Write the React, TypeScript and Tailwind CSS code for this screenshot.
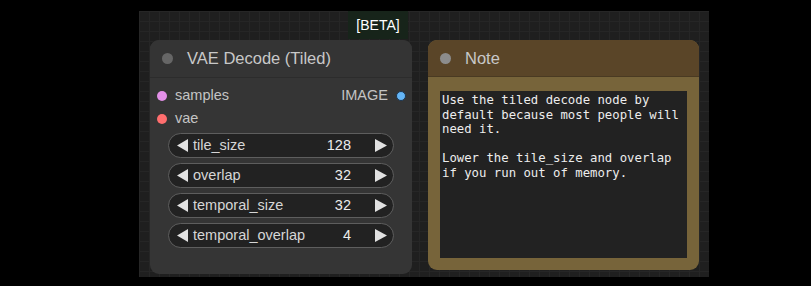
import React from "react";

const sans = { fontFamily: '"Liberation Sans", Arial, sans-serif' };

function Widget({ label, value }: { label: string; value: string }) {
  return (
    <div className="h-[25px] rounded-full border border-[#5e5e5e] bg-[#222222] flex items-center pl-[8px] pr-[6px] text-[14.5px] text-[#d6d6d6]">
      <svg width="11" height="13" viewBox="0 0 11 13" className="shrink-0">
        <path d="M0 6.5 L11 0 L11 13 Z" fill="#e2e2e2" />
      </svg>
      <span className="ml-[5px] flex-1">{label}</span>
      <span className="text-[#ececec] mr-[24px]">{value}</span>
      <svg width="12" height="13" viewBox="0 0 12 13" className="shrink-0">
        <path d="M12 6.5 L0 0 L0 13 Z" fill="#e2e2e2" />
      </svg>
    </div>
  );
}

export default function App() {
  return (
    <div className="w-[811px] h-[286px] bg-black relative overflow-hidden" style={sans}>
      <div className="absolute left-[139px] top-[11px] w-[570px] h-[266px] bg-[#1f1f1f] bg-[linear-gradient(#262626_1px,transparent_1px),linear-gradient(90deg,#262626_1px,transparent_1px)] bg-[size:10px_10px]">
        <div className="absolute left-[209px] top-0 w-[60px] h-[28px] bg-[#17241a] flex items-center justify-center text-[14px] text-white">
          [BETA]
        </div>
        {/* VAE node */}
        <div className="absolute left-[11px] top-[29px] w-[262px] h-[234px] rounded-[9px] bg-[#353535] flex flex-col">
          <div className="h-[38px] flex items-center border-b border-[#2c2c2c] rounded-t-[9px] bg-[#343434]">
            <div className="w-[11px] h-[11px] rounded-full bg-[#666666] ml-[12px]" />
            <span className="ml-[14px] text-[16.5px] text-[#c8c8c8]">VAE Decode (Tiled)</span>
          </div>
          <div className="flex items-center h-[21px] mt-[7px] pl-[7px] pr-[6px] text-[14.5px] text-[#c4c4c4]">
            <div className="w-[10px] h-[10px] rounded-full bg-[#e390e8]" />
            <span className="ml-[8px] flex-1">samples</span>
            <span>IMAGE</span>
            <div className="ml-[8px] w-[10px] h-[10px] rounded-full bg-[#64b5f6] border border-[#1c3550]" />
          </div>
          <div className="flex items-center h-[21px] mt-[2px] pl-[7px] text-[14.5px] text-[#c4c4c4]">
            <div className="w-[10px] h-[10px] rounded-full bg-[#ff6e6e]" />
            <span className="ml-[8px]">vae</span>
          </div>
          <div className="flex flex-col gap-[5px] mx-[18px] mt-[4px]">
            <Widget label="tile_size" value="128" />
            <Widget label="overlap" value="32" />
            <Widget label="temporal_size" value="32" />
            <Widget label="temporal_overlap" value="4" />
          </div>
        </div>
        {/* Note node */}
        <div className="absolute left-[289px] top-[29px] w-[271px] h-[230px] rounded-[9px] bg-[#77643a] flex flex-col overflow-hidden">
          <div className="h-[37px] flex items-center bg-[#5a4528] border-b border-[#4a3a22]">
            <div className="w-[11px] h-[11px] rounded-full bg-[#8c8c8c] ml-[12px]" />
            <span className="ml-[14px] text-[16.5px] text-[#c8c8c8]">Note</span>
          </div>
          <div
            className="mx-[12px] mt-[14px] h-[167px] bg-[#222222] px-[2px] pt-[2px] text-[12.3px] leading-[14.5px] text-[#ededed] whitespace-pre"
            style={{ fontFamily: '"DejaVu Sans Mono", monospace' }}
          >
            {"Use the tiled decode node by\ndefault because most people will\nneed it.\n\nLower the tile_size and overlap\nif you run out of memory."}
          </div>
        </div>
      </div>
    </div>
  );
}
